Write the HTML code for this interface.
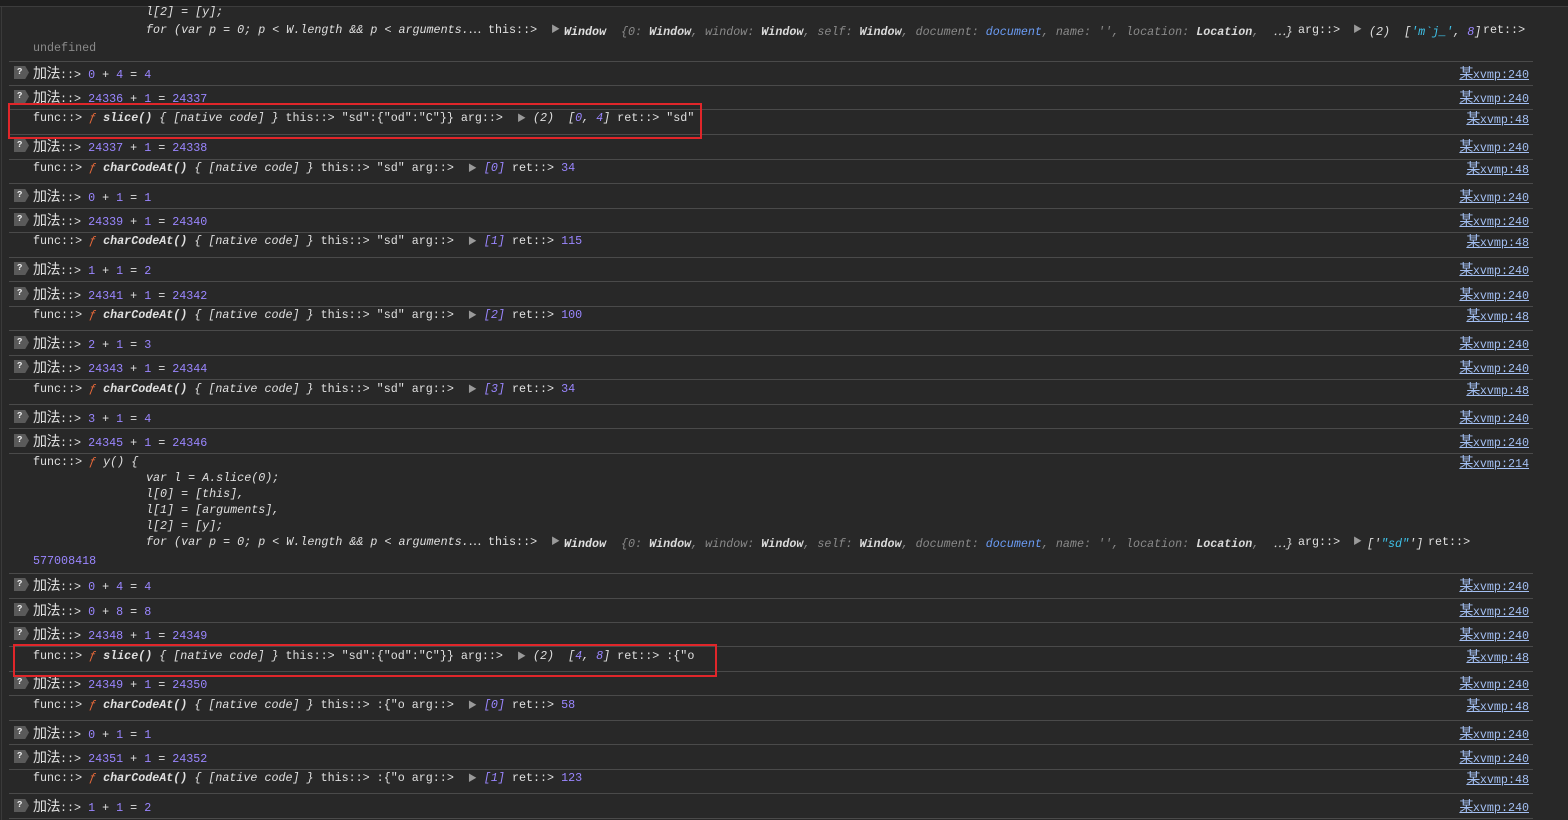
<!DOCTYPE html>
<html><head><meta charset="utf-8">
<style>
html,body{margin:0;padding:0;background:#282828;width:1568px;height:820px;overflow:hidden;}
body{position:relative;font-family:"Liberation Mono","Noto Sans CJK SC",monospace;font-size:11.7px;color:#e0e0e0;}
.top{position:absolute;left:0;top:0;width:1568px;height:6px;background:#1f1f1f;border-bottom:1px solid #3c3c3c;}
.lb{position:absolute;left:1px;top:7px;width:1px;height:813px;background:#3a3a3a;}
.sep{position:absolute;left:9px;width:1524px;height:1px;background:#4a4a4a;}
.t{position:absolute;white-space:pre;line-height:16px;height:16px;}
.cj{font-family:"Noto Sans CJK SC","WenQuanYi Zen Hei",sans-serif;font-size:14px;letter-spacing:-0.5px;}
.n{color:#9a86ff}
.f{color:#e8693a;font-style:italic}
.i{font-style:italic}
.b{font-weight:bold}
.g{color:#8a8a8a}
.bl{color:#6b9cf5}
.cy{color:#3fc3ea}
.tri{color:#9a9a9a;font-size:9px}
.l{color:#a3bff2;text-decoration:underline;right:39px}
.q{position:absolute;left:14px;width:15px;height:13px;background:#5a5a5a;clip-path:polygon(0 0,75% 0,100% 50%,75% 100%,0 100%);color:#eee;font-size:9px;line-height:13px;text-indent:3px;font-weight:bold;}
.box{position:absolute;border:2px solid #e0262a;box-sizing:border-box;}
</style></head><body>
<div class="top"></div>
<div class="lb"></div>

<div class="t i" style="left:146px;top:4px">l[2] = [y];</div>
<div class="t i" style="left:146px;top:22px">for (var p = 0; p &lt; W.length &amp;&amp; p &lt; arguments.<span style="font-style:normal">⋯</span></div>
<div class="t" style="left:488px;top:22px">this::&gt;</div>
<div class="t tri" style="left:551px;top:22px">▶</div>
<div class="t i b" style="left:564px;top:24px">Window</div>
<div class="t i g" style="left:621px;top:24px">{0: <span class="b" style="color:#dadada">Window</span>, window: <span class="b" style="color:#dadada">Window</span>, self: <span class="b" style="color:#dadada">Window</span>, document: <span class="bl">document</span>, name: '', location: <span class="b" style="color:#dadada">Location</span>,  <span style="color:#dadada">⋯}</span></div>
<div class="t" style="left:1298px;top:22px">arg::&gt;</div>
<div class="t tri" style="left:1353px;top:22px">▶</div>
<div class="t i" style="left:1369px;top:24px">(2)  [<span class="cy">'m`j_'</span>, <span class="n">8</span>]</div>
<div class="t" style="left:1483px;top:22px">ret::&gt;</div>
<div class="t g" style="left:33px;top:40px">undefined</div>
<div class="sep" style="top:61px"></div>

<div class="q" style="top:66px">?</div><div class="t" style="left:33px;top:65px"><span class="cj">加法</span>::&gt; <span class="n">0</span> + <span class="n">4</span> = <span class="n">4</span></div><div class="t l" style="top:65px"><span class="cj">某</span>xvmp:240</div>
<div class="sep" style="top:85px"></div>
<div class="q" style="top:90px">?</div><div class="t" style="left:33px;top:89px"><span class="cj">加法</span>::&gt; <span class="n">24336</span> + <span class="n">1</span> = <span class="n">24337</span></div><div class="t l" style="top:89px"><span class="cj">某</span>xvmp:240</div>
<div class="sep" style="top:109px"></div>
<div class="t" style="left:33px;top:110px">func::&gt; <span class="f">ƒ</span> <span class="i b">slice()</span> <span class="i">{ [native code] }</span> this::&gt; "sd":{"od":"C"}} arg::&gt;  <span class="tri">▶</span> <span class="i">(2)  [<span class="n">0</span>, <span class="n">4</span>]</span> ret::&gt; "sd"</div><div class="t l" style="top:110px"><span class="cj">某</span>xvmp:48</div>
<div class="sep" style="top:134px"></div>
<div class="q" style="top:139px">?</div><div class="t" style="left:33px;top:138px"><span class="cj">加法</span>::&gt; <span class="n">24337</span> + <span class="n">1</span> = <span class="n">24338</span></div><div class="t l" style="top:138px"><span class="cj">某</span>xvmp:240</div>
<div class="sep" style="top:159px"></div>
<div class="t" style="left:33px;top:160px">func::&gt; <span class="f">ƒ</span> <span class="i b">charCodeAt()</span> <span class="i">{ [native code] }</span> this::&gt; "sd" arg::&gt;  <span class="tri">▶</span> <span class="i n">[0]</span> ret::&gt; <span class="n">34</span></div><div class="t l" style="top:160px"><span class="cj">某</span>xvmp:48</div>
<div class="sep" style="top:183px"></div>
<div class="q" style="top:189px">?</div><div class="t" style="left:33px;top:188px"><span class="cj">加法</span>::&gt; <span class="n">0</span> + <span class="n">1</span> = <span class="n">1</span></div><div class="t l" style="top:188px"><span class="cj">某</span>xvmp:240</div>
<div class="sep" style="top:208px"></div>
<div class="q" style="top:213px">?</div><div class="t" style="left:33px;top:212px"><span class="cj">加法</span>::&gt; <span class="n">24339</span> + <span class="n">1</span> = <span class="n">24340</span></div><div class="t l" style="top:212px"><span class="cj">某</span>xvmp:240</div>
<div class="sep" style="top:232px"></div>
<div class="t" style="left:33px;top:233px">func::&gt; <span class="f">ƒ</span> <span class="i b">charCodeAt()</span> <span class="i">{ [native code] }</span> this::&gt; "sd" arg::&gt;  <span class="tri">▶</span> <span class="i n">[1]</span> ret::&gt; <span class="n">115</span></div><div class="t l" style="top:233px"><span class="cj">某</span>xvmp:48</div>
<div class="sep" style="top:257px"></div>
<div class="q" style="top:262px">?</div><div class="t" style="left:33px;top:261px"><span class="cj">加法</span>::&gt; <span class="n">1</span> + <span class="n">1</span> = <span class="n">2</span></div><div class="t l" style="top:261px"><span class="cj">某</span>xvmp:240</div>
<div class="sep" style="top:281px"></div>
<div class="q" style="top:287px">?</div><div class="t" style="left:33px;top:286px"><span class="cj">加法</span>::&gt; <span class="n">24341</span> + <span class="n">1</span> = <span class="n">24342</span></div><div class="t l" style="top:286px"><span class="cj">某</span>xvmp:240</div>
<div class="sep" style="top:306px"></div>
<div class="t" style="left:33px;top:307px">func::&gt; <span class="f">ƒ</span> <span class="i b">charCodeAt()</span> <span class="i">{ [native code] }</span> this::&gt; "sd" arg::&gt;  <span class="tri">▶</span> <span class="i n">[2]</span> ret::&gt; <span class="n">100</span></div><div class="t l" style="top:307px"><span class="cj">某</span>xvmp:48</div>
<div class="sep" style="top:330px"></div>
<div class="q" style="top:336px">?</div><div class="t" style="left:33px;top:335px"><span class="cj">加法</span>::&gt; <span class="n">2</span> + <span class="n">1</span> = <span class="n">3</span></div><div class="t l" style="top:335px"><span class="cj">某</span>xvmp:240</div>
<div class="sep" style="top:355px"></div>
<div class="q" style="top:360px">?</div><div class="t" style="left:33px;top:359px"><span class="cj">加法</span>::&gt; <span class="n">24343</span> + <span class="n">1</span> = <span class="n">24344</span></div><div class="t l" style="top:359px"><span class="cj">某</span>xvmp:240</div>
<div class="sep" style="top:379px"></div>
<div class="t" style="left:33px;top:381px">func::&gt; <span class="f">ƒ</span> <span class="i b">charCodeAt()</span> <span class="i">{ [native code] }</span> this::&gt; "sd" arg::&gt;  <span class="tri">▶</span> <span class="i n">[3]</span> ret::&gt; <span class="n">34</span></div><div class="t l" style="top:381px"><span class="cj">某</span>xvmp:48</div>
<div class="sep" style="top:404px"></div>
<div class="q" style="top:410px">?</div><div class="t" style="left:33px;top:409px"><span class="cj">加法</span>::&gt; <span class="n">3</span> + <span class="n">1</span> = <span class="n">4</span></div><div class="t l" style="top:409px"><span class="cj">某</span>xvmp:240</div>
<div class="sep" style="top:428px"></div>
<div class="q" style="top:434px">?</div><div class="t" style="left:33px;top:433px"><span class="cj">加法</span>::&gt; <span class="n">24345</span> + <span class="n">1</span> = <span class="n">24346</span></div><div class="t l" style="top:433px"><span class="cj">某</span>xvmp:240</div>
<div class="sep" style="top:453px"></div>
<div class="t" style="left:33px;top:454px">func::&gt; <span class="f">ƒ</span> <span class="i">y() {</span></div><div class="t l" style="top:454px"><span class="cj">某</span>xvmp:214</div>
<div class="t i" style="left:146px;top:470px">var l = A.slice(0);</div>
<div class="t i" style="left:146px;top:486px">l[0] = [this],</div>
<div class="t i" style="left:146px;top:502px">l[1] = [arguments],</div>
<div class="t i" style="left:146px;top:518px">l[2] = [y];</div>
<div class="t i" style="left:146px;top:534px">for (var p = 0; p &lt; W.length &amp;&amp; p &lt; arguments.<span style="font-style:normal">⋯</span></div>
<div class="t" style="left:488px;top:534px">this::&gt;</div>
<div class="t tri" style="left:551px;top:534px">▶</div>
<div class="t i b" style="left:564px;top:536px">Window</div>
<div class="t i g" style="left:621px;top:536px">{0: <span class="b" style="color:#dadada">Window</span>, window: <span class="b" style="color:#dadada">Window</span>, self: <span class="b" style="color:#dadada">Window</span>, document: <span class="bl">document</span>, name: '', location: <span class="b" style="color:#dadada">Location</span>,  <span style="color:#dadada">⋯}</span></div>
<div class="t" style="left:1298px;top:534px">arg::&gt;</div>
<div class="t tri" style="left:1353px;top:534px">▶</div>
<div class="t i" style="left:1367px;top:536px">['<span class="cy">"sd"</span>']</div>
<div class="t" style="left:1428px;top:534px">ret::&gt;</div>
<div class="t n" style="left:33px;top:553px">577008418</div>
<div class="sep" style="top:573px"></div>
<div class="q" style="top:578px">?</div><div class="t" style="left:33px;top:577px"><span class="cj">加法</span>::&gt; <span class="n">0</span> + <span class="n">4</span> = <span class="n">4</span></div><div class="t l" style="top:577px"><span class="cj">某</span>xvmp:240</div>
<div class="sep" style="top:598px"></div>
<div class="q" style="top:603px">?</div><div class="t" style="left:33px;top:602px"><span class="cj">加法</span>::&gt; <span class="n">0</span> + <span class="n">8</span> = <span class="n">8</span></div><div class="t l" style="top:602px"><span class="cj">某</span>xvmp:240</div>
<div class="sep" style="top:622px"></div>
<div class="q" style="top:627px">?</div><div class="t" style="left:33px;top:626px"><span class="cj">加法</span>::&gt; <span class="n">24348</span> + <span class="n">1</span> = <span class="n">24349</span></div><div class="t l" style="top:626px"><span class="cj">某</span>xvmp:240</div>
<div class="sep" style="top:646px"></div>
<div class="t" style="left:33px;top:648px">func::&gt; <span class="f">ƒ</span> <span class="i b">slice()</span> <span class="i">{ [native code] }</span> this::&gt; "sd":{"od":"C"}} arg::&gt;  <span class="tri">▶</span> <span class="i">(2)  [<span class="n">4</span>, <span class="n">8</span>]</span> ret::&gt; :{"o</div><div class="t l" style="top:648px"><span class="cj">某</span>xvmp:48</div>
<div class="sep" style="top:671px"></div>
<div class="q" style="top:676px">?</div><div class="t" style="left:33px;top:675px"><span class="cj">加法</span>::&gt; <span class="n">24349</span> + <span class="n">1</span> = <span class="n">24350</span></div><div class="t l" style="top:675px"><span class="cj">某</span>xvmp:240</div>
<div class="sep" style="top:695px"></div>
<div class="t" style="left:33px;top:697px">func::&gt; <span class="f">ƒ</span> <span class="i b">charCodeAt()</span> <span class="i">{ [native code] }</span> this::&gt; :{"o arg::&gt;  <span class="tri">▶</span> <span class="i n">[0]</span> ret::&gt; <span class="n">58</span></div><div class="t l" style="top:697px"><span class="cj">某</span>xvmp:48</div>
<div class="sep" style="top:720px"></div>
<div class="q" style="top:726px">?</div><div class="t" style="left:33px;top:725px"><span class="cj">加法</span>::&gt; <span class="n">0</span> + <span class="n">1</span> = <span class="n">1</span></div><div class="t l" style="top:725px"><span class="cj">某</span>xvmp:240</div>
<div class="sep" style="top:744px"></div>
<div class="q" style="top:750px">?</div><div class="t" style="left:33px;top:749px"><span class="cj">加法</span>::&gt; <span class="n">24351</span> + <span class="n">1</span> = <span class="n">24352</span></div><div class="t l" style="top:749px"><span class="cj">某</span>xvmp:240</div>
<div class="sep" style="top:769px"></div>
<div class="t" style="left:33px;top:770px">func::&gt; <span class="f">ƒ</span> <span class="i b">charCodeAt()</span> <span class="i">{ [native code] }</span> this::&gt; :{"o arg::&gt;  <span class="tri">▶</span> <span class="i n">[1]</span> ret::&gt; <span class="n">123</span></div><div class="t l" style="top:770px"><span class="cj">某</span>xvmp:48</div>
<div class="sep" style="top:793px"></div>
<div class="q" style="top:799px">?</div><div class="t" style="left:33px;top:798px"><span class="cj">加法</span>::&gt; <span class="n">1</span> + <span class="n">1</span> = <span class="n">2</span></div><div class="t l" style="top:798px"><span class="cj">某</span>xvmp:240</div>
<div class="sep" style="top:818px"></div>

<div class="box" style="left:8px;top:103px;width:694px;height:36px"></div>
<div class="box" style="left:13px;top:644px;width:704px;height:33px"></div>
</body></html>
